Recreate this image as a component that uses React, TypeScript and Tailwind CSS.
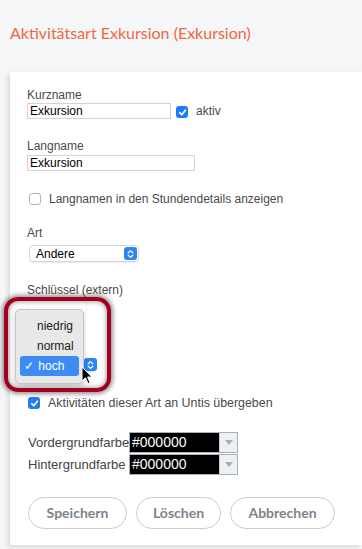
import React from "react";

const sys = { fontFamily: '"Liberation Sans", Arial, sans-serif' };
const lato = { fontFamily: 'Lato, "Open Sans", sans-serif' };

function Check({ on }: { on?: boolean }) {
  if (!on) {
    return <span className="block w-[12px] h-[12px] rounded-[3px] border border-[#b4b4b4] bg-white shrink-0" />;
  }
  return (
    <span className="flex items-center justify-center w-[12px] h-[12px] rounded-[3px] bg-[#1f7cf4] shrink-0">
      <svg width="9" height="9" viewBox="0 0 10 10">
        <path d="M2 5.2 L4.2 7.4 L8.2 2.4" stroke="white" strokeWidth="1.8" fill="none" strokeLinecap="round" strokeLinejoin="round" />
      </svg>
    </span>
  );
}

function Stepper() {
  return (
    <span className="flex items-center justify-center w-[13px] h-[13px] rounded-[3px] bg-[#2a84f6]">
      <svg width="7" height="10" viewBox="0 0 7 10">
        <path d="M1.2 3.8 L3.5 1.6 L5.8 3.8 M1.2 6.2 L3.5 8.4 L5.8 6.2" stroke="white" strokeWidth="1.2" fill="none" strokeLinecap="round" strokeLinejoin="round" />
      </svg>
    </span>
  );
}

function ColorField({ label }: { label: string }) {
  return (
    <div className="flex items-center h-[21px]">
      <span className="w-[101px] text-[13px] leading-[16px] text-[#444]" style={sys}>{label}</span>
      <div className="flex h-[21px] border border-[#a9b0bc]">
        <div className="w-[89px] bg-black text-white text-[14px] leading-[19px] pl-[2px]" style={sys}>#000000</div>
        <div className="w-[18px] bg-[#eef0f3] border-l border-[#c5cad3] flex items-center justify-center">
          <svg width="8" height="5" viewBox="0 0 8 5"><path d="M0 0 L8 0 L4 5 Z" fill="#9fb0c8" /></svg>
        </div>
      </div>
    </div>
  );
}

export default function App() {
  return (
    <div className="relative w-[362px] h-[549px] overflow-hidden bg-[#f5f6f8]">
      <h1 className="pt-[22px] pl-[10px] text-[16px] leading-[22px] text-[#f0673f]" style={lato}>
        Aktivitätsart Exkursion (Exkursion)
      </h1>

      <div className="mt-[28px] ml-[10px] h-[473px] bg-white shadow-[-2px_2px_5px_rgba(0,0,0,0.12)] pl-[17px] pt-[16px] leading-[14px]">
        {/* Kurzname */}
        <div className="text-[12px] leading-[14px] text-[#4a4a4a]" style={sys}>Kurzname</div>
        <div className="mt-[1px] flex items-center h-[16px]">
          <div className="w-[144px] h-[16px] border border-[#d4d4d4] text-[12px] leading-[14px] pl-[2px] text-black" style={sys}>Exkursion</div>
          <div className="ml-[5px] mt-[2px]"><Check on /></div>
          <span className="ml-[8px] text-[12px] leading-[14px] text-[#4a4a4a]" style={sys}>aktiv</span>
        </div>

        {/* Langname */}
        <div className="mt-[20px] text-[12px] leading-[14px] text-[#4a4a4a]" style={sys}>Langname</div>
        <div className="mt-[2px] w-[168px] h-[16px] border border-[#d4d4d4] text-[12px] leading-[14px] pl-[2px] text-black" style={sys}>Exkursion</div>

        <div className="mt-[21px] flex items-center h-[14px] pl-[2px]">
          <Check />
          <span className="ml-[8px] text-[12px] leading-[14px] text-[#4a4a4a]" style={sys}>Langnamen in den Stundendetails anzeigen</span>
        </div>

        {/* Art */}
        <div className="mt-[20px] text-[12px] leading-[14px] text-[#4a4a4a]" style={sys}>Art</div>
        <div className="mt-[5px] ml-[2px] w-[110px] h-[17px] rounded-[4px] border border-[#d6d6d6] shadow-[0_1px_1px_rgba(0,0,0,0.08)] flex items-center justify-between pl-[6px] pr-[1px]">
          <span className="text-[12px] leading-[14px] text-black" style={sys}>Andere</span>
          <Stepper />
        </div>

        {/* Schlüssel (the priority select below sits under the open menu) */}
        <div className="mt-[21px] text-[12px] leading-[14px] text-[#4a4a4a]" style={sys}>Schlüssel (extern)</div>
        <div className="mt-[1px] w-[60px] h-[16px] border border-[#d4d4d4]" />
        <div className="mt-[43px] ml-[2px] w-[68px] h-[17px] rounded-[4px] border border-[#d6d6d6] flex items-center justify-end pr-[1px]">
          <Stepper />
        </div>

        <div className="mt-[22px] flex items-center h-[14px] pl-[1px]">
          <Check on />
          <span className="ml-[8px] text-[12.4px] leading-[14px] text-[#4a4a4a]" style={sys}>Aktivitäten dieser Art an Untis übergeben</span>
        </div>

        {/* Farben */}
        <div className="mt-[22px] pl-[1px]">
          <ColorField label="Vordergrundfarbe" />
          <div className="h-[1px]" />
          <ColorField label="Hintergrundfarbe" />
        </div>

        <div className="mt-[22px] flex gap-[9px] pl-[1px]" style={lato}>
          <button className="w-[99px] h-[32px] rounded-full border border-[#c9cdd3] text-[14px] font-bold text-[#7d838b] bg-white">Speichern</button>
          <button className="w-[85px] h-[32px] rounded-full border border-[#c9cdd3] text-[14px] font-bold text-[#7d838b] bg-white">Löschen</button>
          <button className="w-[105px] h-[32px] rounded-full border border-[#c9cdd3] text-[14px] font-bold text-[#7d838b] bg-white">Abbrechen</button>
        </div>
      </div>

      {/* Highlighted popup menu */}
      <div className="absolute left-[4px] top-[297px] w-[107px] h-[95px] rounded-[14px] border-[4px] border-[#a3001f] bg-white/75 shadow-[0_0_4px_2px_rgba(60,60,60,0.55),inset_0_0_4px_1px_rgba(60,60,60,0.45)]" />
      <div className="absolute left-[84px] top-[358px]"><Stepper /></div>
      <div className="absolute left-[15px] top-[309px] w-[69px] h-[75px] rounded-[5px] bg-[#e8e8e8] border border-[#c6c6c6] shadow-[0_2px_4px_rgba(0,0,0,0.2)] pt-[6px] px-[4px]" style={sys}>
        <div className="h-[20px] pl-[17px] text-[12px] leading-[20px] text-[#222]">niedrig</div>
        <div className="h-[20px] pl-[17px] text-[12px] leading-[20px] text-[#222]">normal</div>
        <div className="h-[20px] rounded-[3px] bg-[#3d8cf5] pl-[4px] text-[12px] leading-[20px] text-white">✓ <span className="ml-[1px]">hoch</span></div>
      </div>
      <svg className="absolute left-[81px] top-[366px]" width="12" height="19" viewBox="0 0 12 19">
        <path d="M1 1 L1 15 L4.5 11.8 L7 17.5 L9 16.6 L6.6 11 L11 11 Z" fill="black" stroke="white" strokeWidth="1" strokeLinejoin="round" />
      </svg>
    </div>
  );
}
